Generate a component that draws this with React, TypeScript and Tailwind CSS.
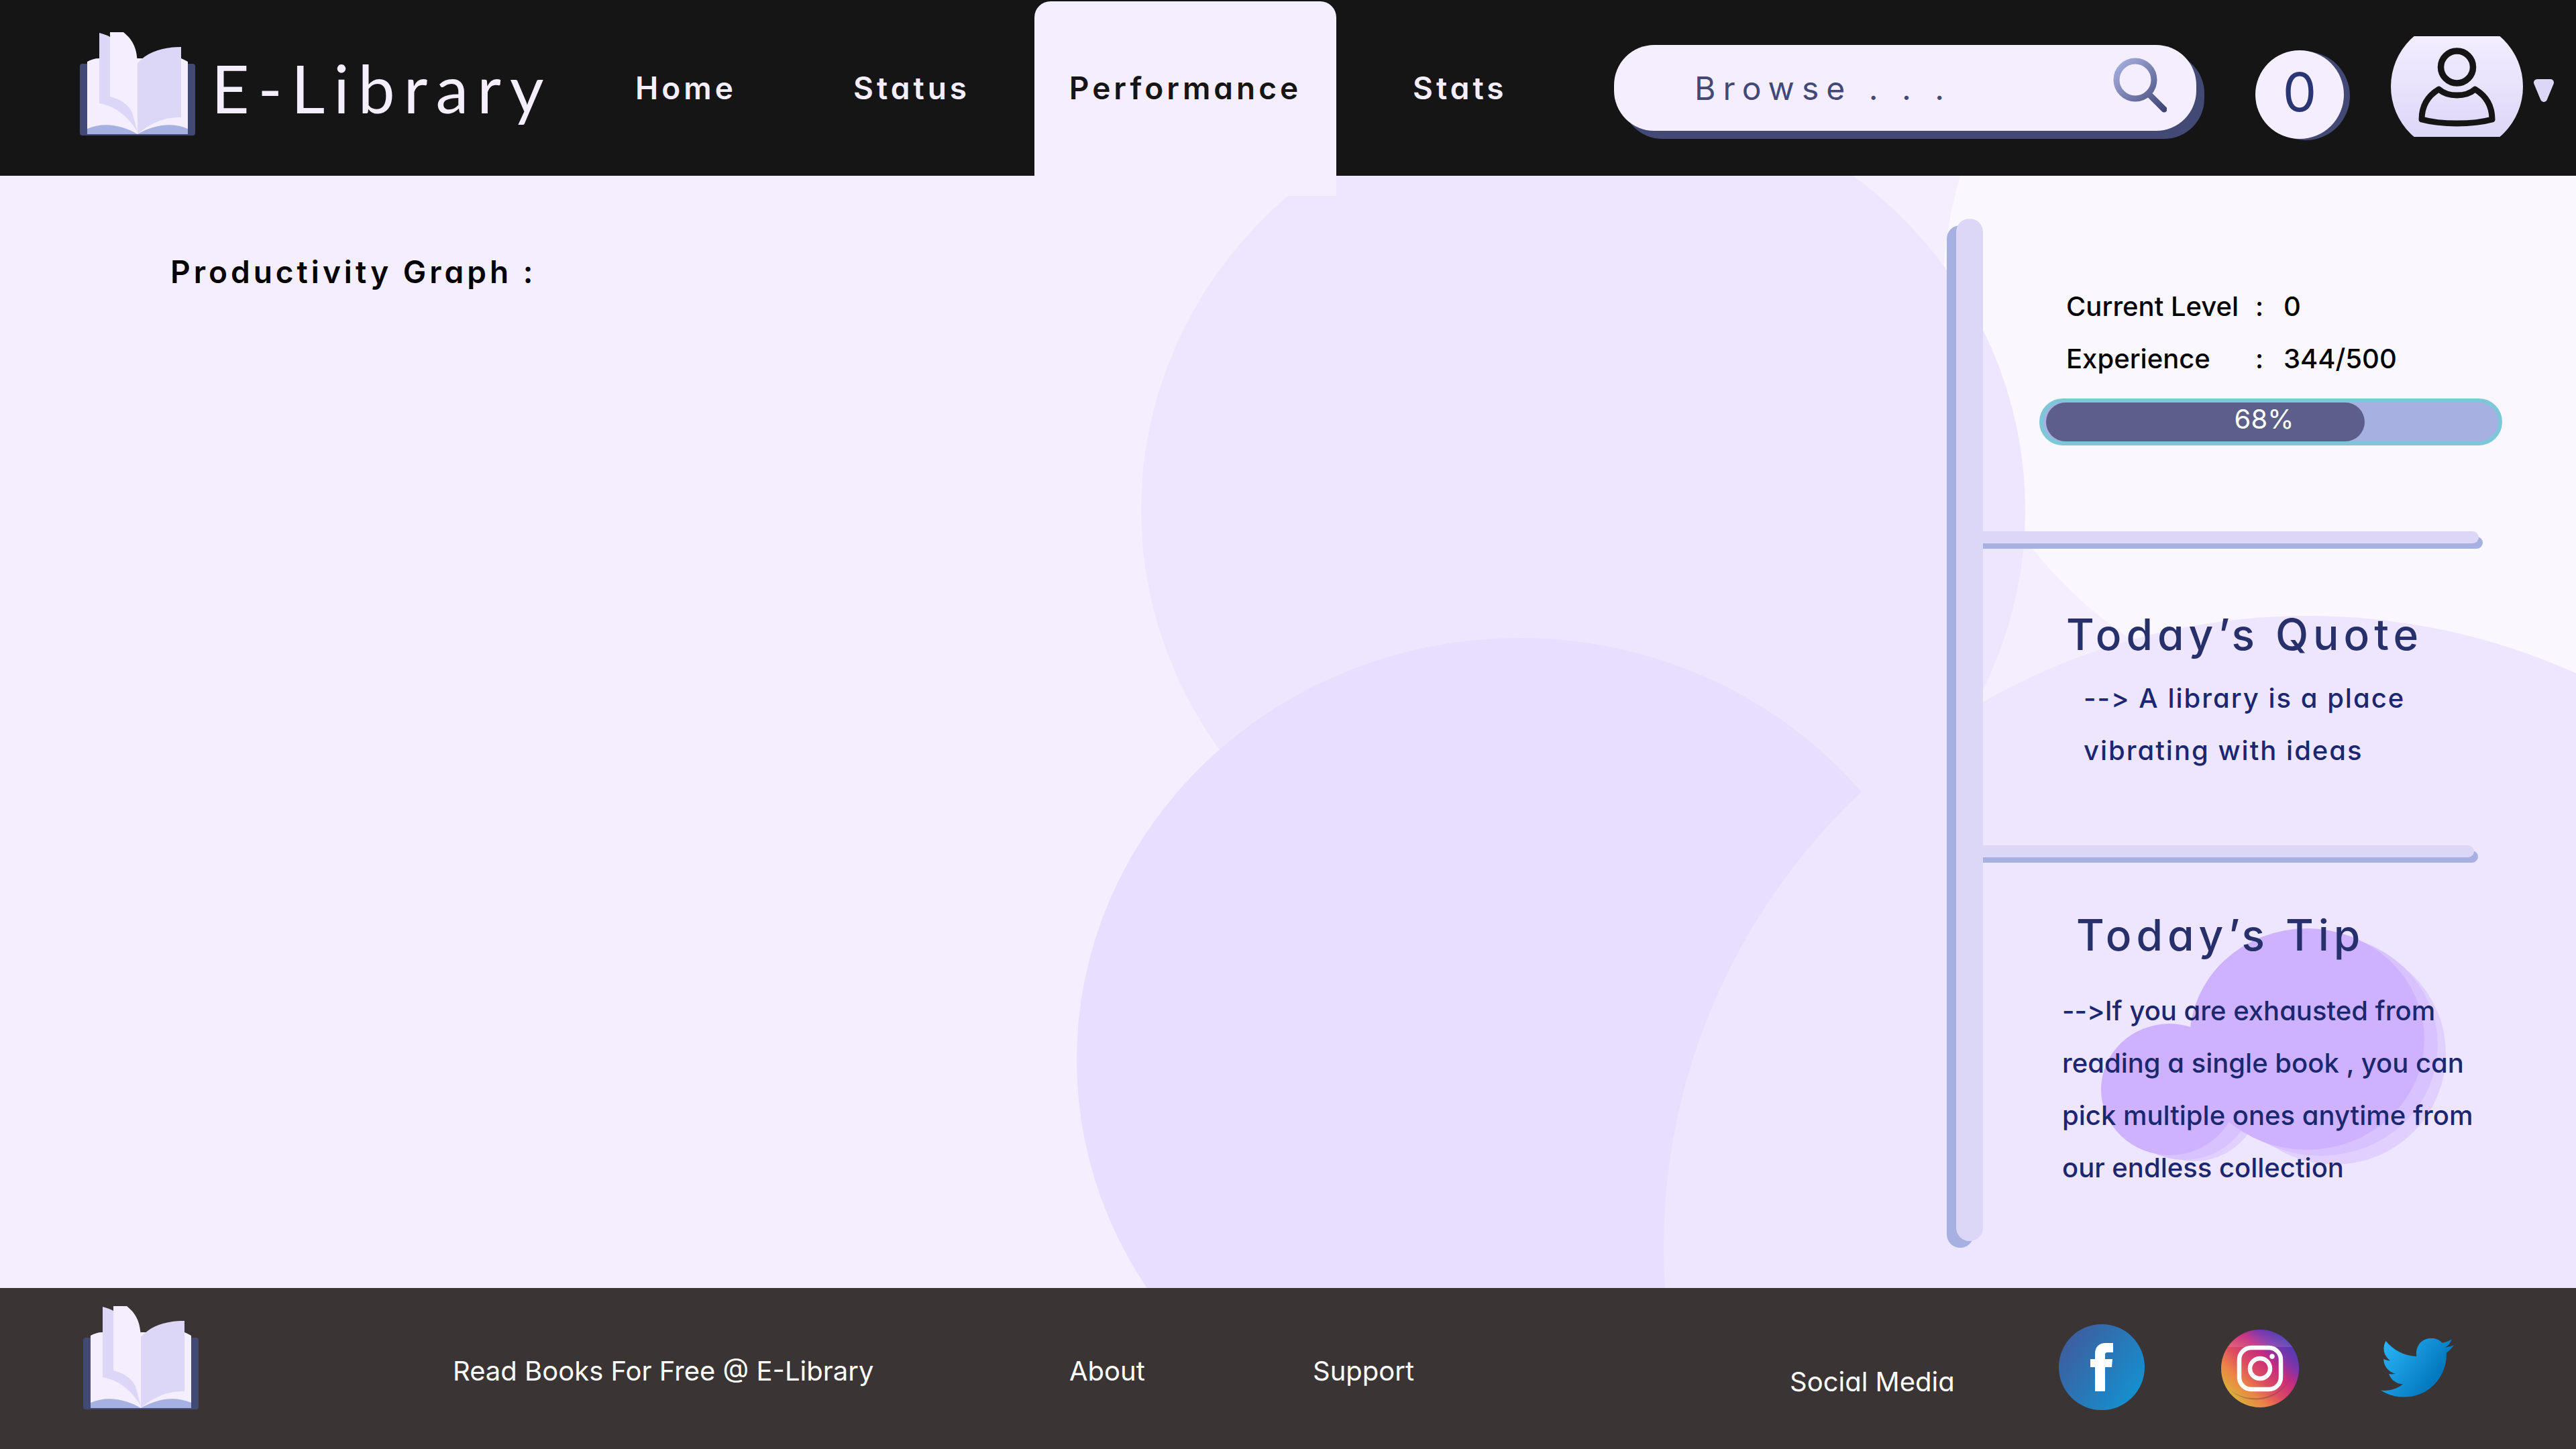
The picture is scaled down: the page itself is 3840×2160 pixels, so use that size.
import React from "react";

function BookLogo() {
  return (
    <svg viewBox="0 0 172 154" className="block h-[154px] w-[172px] shrink-0" aria-hidden="true">
      <rect x="0" y="47" width="172" height="107" rx="4" fill="#424974" />
      <path d="M11 44C16 41 22 39 29 39H151C155 41 158 42 161 44V152H11Z" fill="#F5EEFF" />
      <path d="M11 144C36 133 64 139 86 152C108 139 136 133 161 144V152H11Z" fill="#A6B0E1" />
      <path d="M29 1C36 3 42 5 45 7L62 60L86 149C74 128 54 110 29 106Z" fill="#DCD7F7" />
      <path d="M45 0H65C81 13 85 26 86 46V149C84 128 78 104 45 96Z" fill="#F5EEFF" />
      <path d="M86 46C102 28 125 22 151 22V127C126 127 108 134 86 152Z" fill="#DCD7F7" />
    </svg>
  );
}

function SearchIcon() {
  return (
    <svg viewBox="0 0 80 82" className="h-[82px] w-20" fill="none" aria-hidden="true">
      <defs>
        <linearGradient id="lens" x1="0" y1="0" x2="80" y2="82" gradientUnits="userSpaceOnUse">
          <stop stopColor="#AEB8E6" />
          <stop offset="1" stopColor="#3A4070" />
        </linearGradient>
      </defs>
      <circle cx="33" cy="33" r="28" stroke="url(#lens)" strokeWidth="9" />
      <path d="M54 55L76 77" stroke="url(#lens)" strokeWidth="9" strokeLinecap="round" />
    </svg>
  );
}

function Avatar() {
  return (
    <svg viewBox="0 0 197 150" className="h-[150px] w-[197px]" fill="none" aria-hidden="true">
      <defs>
        <linearGradient id="skin" x1="0" y1="0" x2="0" y2="150" gradientUnits="userSpaceOnUse">
          <stop stopColor="#F3EDFF" />
          <stop offset="1" stopColor="#DDD7F7" />
        </linearGradient>
      </defs>
      <circle cx="98.500" cy="75" r="98.500" fill="url(#skin)" />
      <circle cx="98.500" cy="46" r="24" stroke="#151515" strokeWidth="9.500" />
      <path
        d="M71.500 79C55 89 46 104 46 124C75 132 122 132 151 124C151 104 142 89 125.500 79C112 91 85 91 71.500 79Z"
        stroke="#151515"
        strokeWidth="9"
        strokeLinejoin="round"
      />
    </svg>
  );
}

function FacebookIcon() {
  return (
    <svg viewBox="0 0 128 128" className="size-32" aria-hidden="true">
      <defs>
        <linearGradient id="fb" x1="10" y1="25" x2="118" y2="103" gradientUnits="userSpaceOnUse">
          <stop stopColor="#3D5E9F" />
          <stop offset="1" stopColor="#1590CE" />
        </linearGradient>
      </defs>
      <circle cx="64" cy="64" r="64" fill="url(#fb)" />
      <path d="M54 100V64H47V52H54V44C54 34 60 28 70 28H81V42H73C70 42 69 43 69 46V52H80L79 64H69V100Z" fill="#fff" />
    </svg>
  );
}

function InstagramIcon() {
  return (
    <svg viewBox="0 0 116 116" className="size-[116px]" aria-hidden="true">
      <defs>
        <linearGradient id="ig" x1="14" y1="100" x2="100" y2="14" gradientUnits="userSpaceOnUse">
          <stop stopColor="#D9B23A" />
          <stop offset="0.220" stopColor="#EC8445" />
          <stop offset="0.420" stopColor="#DC4C62" />
          <stop offset="0.640" stopColor="#C72C7C" />
          <stop offset="0.800" stopColor="#8034AA" />
          <stop offset="1" stopColor="#4B3CB4" />
        </linearGradient>
        <linearGradient id="igShade" x1="0" y1="60" x2="0" y2="116" gradientUnits="userSpaceOnUse">
          <stop stopColor="#3A3534" stopOpacity="0" />
          <stop offset="0.800" stopColor="#3A3534" stopOpacity="0.350" />
          <stop offset="1" stopColor="#3A3534" stopOpacity="0" />
        </linearGradient>
        <linearGradient id="igGloss" x1="0" y1="0" x2="0" y2="26" gradientUnits="userSpaceOnUse">
          <stop stopColor="#fff" stopOpacity="0" />
          <stop offset="1" stopColor="#fff" stopOpacity="0.130" />
        </linearGradient>
      </defs>
      <circle cx="58" cy="58" r="58" fill="url(#ig)" />
      <path d="M11 88C38 112 92 108 108 60A58 58 0 0 1 11 88Z" fill="url(#igShade)" />
      <path d="M10 26A58 58 0 0 1 106 26Z" fill="url(#igGloss)" />
      <rect x="27" y="27" width="62" height="62" rx="18" fill="none" stroke="#fff" strokeWidth="6.500" />
      <circle cx="58" cy="58" r="15" fill="none" stroke="#fff" strokeWidth="6.500" />
      <circle cx="76" cy="40" r="3.700" fill="#fff" />
    </svg>
  );
}

function TwitterIcon() {
  return (
    <svg viewBox="0 0 24 20" className="h-[90px] w-[109px]" aria-hidden="true" preserveAspectRatio="none">
      <defs>
        <linearGradient id="tw" x1="2" y1="3" x2="19" y2="15" gradientUnits="userSpaceOnUse">
          <stop stopColor="#29B3F6" />
          <stop offset="1" stopColor="#0277BD" />
        </linearGradient>
      </defs>
      <path
        fill="url(#tw)"
        transform="translate(0 -2.300)"
        d="M23.953 4.570a10 10 0 01-2.825.775 4.958 4.958 0 002.163-2.723c-.951.555-2.005.959-3.127 1.184a4.920 4.920 0 00-8.384 4.482C7.690 8.095 4.067 6.130 1.640 3.162a4.822 4.822 0 00-.666 2.475c0 1.710.870 3.213 2.188 4.096a4.904 4.904 0 01-2.228-.616v.060a4.923 4.923 0 003.946 4.827 4.996 4.996 0 01-2.212.085 4.936 4.936 0 004.604 3.417 9.867 9.867 0 01-6.102 2.105c-.390 0-.779-.023-1.170-.067a13.995 13.995 0 007.557 2.209c9.053 0 13.998-7.496 13.998-13.985 0-.210 0-.420-.015-.630A9.935 9.935 0 0024 4.590z"
      />
    </svg>
  );
}

function Backdrop() {
  return (
    <svg
      viewBox="0 0 3840 1658"
      preserveAspectRatio="xMaxYMin slice"
      className="pointer-events-none absolute inset-0 size-full"
      aria-hidden="true"
    >
      <ellipse cx="3555" cy="176" rx="659" ry="629" fill="#FAF7FF" />
      <ellipse cx="2360" cy="498" rx="659" ry="629" fill="#EEE6FF" />
      <ellipse cx="2265" cy="1318" rx="660" ry="629" fill="#E8DEFF" />
      <ellipse cx="3440" cy="1597" rx="960" ry="941" fill="#EEE6FF" />
      <g fill="#E1D0FF">
        <ellipse cx="3480" cy="1309" rx="166" ry="165" />
        <ellipse cx="3271" cy="1372" rx="98" ry="97" />
      </g>
      <g fill="#D8C2FF">
        <ellipse cx="3459" cy="1296" rx="175" ry="165" />
        <ellipse cx="3256" cy="1369" rx="102" ry="98" />
      </g>
      <g fill="#CFB2FF">
        <ellipse cx="3439" cy="1287" rx="175" ry="165" />
        <ellipse cx="3234" cy="1362" rx="102" ry="98" />
      </g>
    </svg>
  );
}

const navLink = "flex h-[262px] items-center text-[#F5EEFF]";

function Header() {
  return (
    <header className="relative z-10 flex h-[262px] items-center bg-[#151515] pr-[33px] pl-[119px]">
      <a href="#home" className="flex w-[828px] shrink-0 items-center gap-6">
        <span className="-mt-3">
          <BookLogo />
        </span>
        <span className="font-['Lato',sans-serif] text-[98px] leading-[120px] tracking-[13px] text-[#F5EEFF]">E-Library</span>
      </a>
      <nav className="flex items-start self-start text-[46px] font-semibold tracking-[5px]">
        <a href="#home" className={`${navLink} w-[325px]`}>Home</a>
        <a href="#status" className={`${navLink} w-[270px]`}>Status</a>
        <a
          href="#performance"
          aria-current="page"
          className="mt-0.5 flex h-[290px] w-[450px] items-center justify-center rounded-t-3xl bg-[#F5EEFF] pb-8 text-[#151515]"
        >
          Performance
        </a>
        <a href="#stats" className={`${navLink} pl-[114px]`}>Stats</a>
      </nav>
      <div className="ml-auto flex items-center">
        <form
          role="search"
          className="flex h-32 w-[868px] items-center rounded-[60px] bg-[#F5EEFF] pr-11 pl-[120px] shadow-[12px_12px_0_#424974]"
          onSubmit={(e) => e.preventDefault()}
        >
          <input
            type="text"
            aria-label="Browse books"
            placeholder="Browse . . ."
            className="h-full min-w-0 flex-1 bg-transparent text-5xl tracking-[11px] text-[#424974] outline-none placeholder:text-[#424974]"
          />
          <button type="submit" aria-label="Search" className="-mt-2">
            <SearchIcon />
          </button>
        </form>
        <button
          aria-label="Cart items"
          className="mt-5 ml-[88px] flex size-[132px] items-center justify-center rounded-full bg-[#F5EEFF] pb-2 text-[80px] text-[#2A3673] shadow-[9px_2px_0_#424974]"
        >
          0
        </button>
        <button aria-label="Account" className="-mt-1 ml-[70px] flex items-center gap-4">
          <Avatar />
          <svg viewBox="0 0 30 34" className="mt-3 h-[34px] w-[30px]" aria-hidden="true">
            <path d="M5 5H25L15 29Z" fill="#DCD7F7" stroke="#DCD7F7" strokeWidth="10" strokeLinejoin="round" />
          </svg>
        </button>
      </div>
    </header>
  );
}

const rule = "-ml-5 h-[18px] rounded-r-full bg-[#DCD7F7] shadow-[6px_8px_0_#A6B0E1]";

function Sidebar() {
  return (
    <aside className="relative flex w-[924px] shrink-0 pt-16 pb-[70px]">
      <div className="z-10 w-10 shrink-0 rounded-full bg-[#DCD7F7] shadow-[-14px_10px_0_#A6B0E1]" />
      <div className="flex-1 text-[40px] leading-[78px]">
        <section className="h-[466px] pt-[92px]">
          <dl className="grid grid-cols-[282px_42px_1fr] pl-[124px] font-medium text-black">
            <dt>Current Level</dt>
            <dd>:</dd>
            <dd>0</dd>
            <dt>Experience</dt>
            <dd>:</dd>
            <dd>344/500</dd>
          </dl>
          <div
            role="progressbar"
            aria-label="Experience"
            aria-valuenow={68}
            className="relative mt-5 ml-[84px] h-[70px] w-[690px] overflow-hidden rounded-full border-[6px] border-[#7CC8D8] bg-[#A6B0E1] pl-1"
          >
            <div className="h-full rounded-full bg-[#5B5F8A]" style={{ width: "70.5%" }} />
            <span className="absolute inset-y-0 right-5 left-0 text-center leading-[50px] text-white">68%</span>
          </div>
        </section>
        <div className={`${rule} w-[759px]`} />
        <section className="h-[450px] pt-[92px] font-medium text-[#1B276F]">
          <h2 className="pl-[124px] text-[64px] leading-[88px] tracking-[7px] text-[#27306A]">Today’s Quote</h2>
          <p className="w-[700px] pt-3 pl-[150px] tracking-[2px]">--&gt; A library is a place vibrating with ideas</p>
        </section>
        <div className={`${rule} w-[752px]`} />
        <section className="pt-[72px] font-medium text-[#1B276F]">
          <h2 className="pl-[139px] text-[64px] leading-[88px] tracking-[7px] text-[#27306A]">Today’s Tip</h2>
          <p className="w-[764px] pt-[30px] pl-[118px]">
            --&gt;If you are exhausted from reading a single book , you can pick multiple ones anytime from our endless collection
          </p>
        </section>
      </div>
    </aside>
  );
}

function Footer() {
  return (
    <footer className="flex h-60 items-center bg-[#3A3534] pr-[182px] pl-[124px] text-[40px] text-white">
      <span className="-mt-8">
        <BookLogo />
      </span>
      <div className="mt-2 flex [font-feature-settings:normal]">
        <p className="ml-[379px] w-[919px] whitespace-nowrap">Read Books For Free @ E-Library</p>
        <a href="#about" className="w-[363px]">About</a>
        <a href="#support">Support</a>
      </div>
      <div className="ml-auto flex items-center">
        <span className="mt-10 w-[401px]">Social Media</span>
        <a href="#facebook" aria-label="Facebook" className="-mt-1"><FacebookIcon /></a>
        <a href="#instagram" aria-label="Instagram" className="ml-[114px]"><InstagramIcon /></a>
        <a href="#twitter" aria-label="Twitter" className="ml-[122px]"><TwitterIcon /></a>
      </div>
    </footer>
  );
}

export default function App() {
  return (
    <div className="flex min-h-screen flex-col bg-[#F5EEFF] font-['Inter',sans-serif] [font-feature-settings:'cv11','calt'_0]">
      <Header />
      <main className="relative flex flex-1 justify-between overflow-hidden">
        <Backdrop />
        <h1 className="relative pt-[113px] pl-[254px] text-[46px] leading-[60px] font-semibold tracking-[5px] text-black">
          Productivity Graph :
        </h1>
        <Sidebar />
      </main>
      <Footer />
    </div>
  );
}
